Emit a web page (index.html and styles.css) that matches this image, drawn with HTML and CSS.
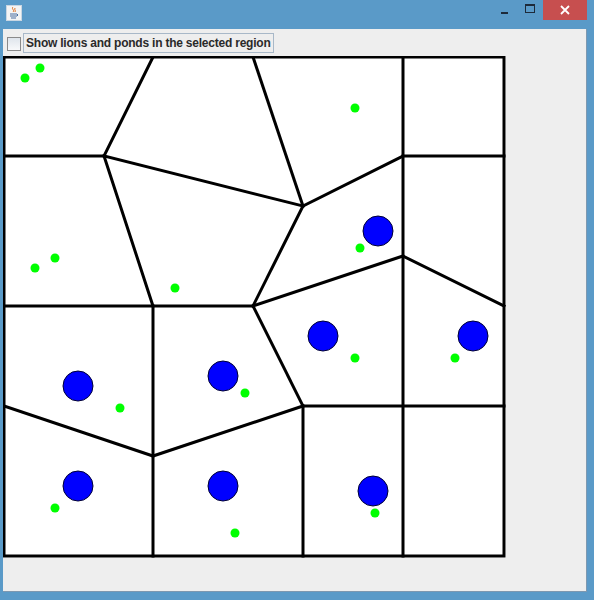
FILE: index.html
```html
<!DOCTYPE html>
<html>
<head>
<meta charset="utf-8">
<link rel="stylesheet" href="styles.css">
</head>
<body>
<div class="window">
  <div class="titlebar">
    <div class="app-icon">
      <svg width="16" height="16" viewBox="0 0 16 16">
        <rect x="0.5" y="0.5" width="15" height="15" fill="#f4f4f4" stroke="#c9d6e2"/>
        <path d="M7 2 C5 4 9 5 7 7 M9 3 C8 5 10 5 9 7" stroke="#e07020" stroke-width="1" fill="none"/>
        <path d="M4 9 H11 M4 11 H11 M5 13 H10" stroke="#4a6fa0" stroke-width="1"/>
        <path d="M11 9 Q13 10 11 11" stroke="#4a6fa0" fill="none"/>
      </svg>
    </div>
    <div class="spacer"></div>
    <div class="btn min"><span class="min-bar"></span></div>
    <div class="btn max"><span class="max-box"></span></div>
    <div class="btn close">
      <svg width="10" height="10" viewBox="0 0 10 10"><path d="M1 1 L9 9 M9 1 L1 9" stroke="#fff" stroke-width="1.8"/></svg>
    </div>
  </div>
  <div class="content">
    <div class="toolbar">
      <span class="checkbox"></span>
      <span class="label">Show lions and ponds in the selected region</span>
    </div>
    <svg class="map" width="503" height="502" viewBox="3 56 503 502">
      <rect x="3" y="56" width="503" height="502" fill="#fff"/>
      <g stroke="#000" stroke-width="3" fill="none" stroke-linecap="square">
        <rect x="4" y="57" width="500" height="499"/>
        <line x1="153" y1="57" x2="104" y2="156"/>
        <line x1="4" y1="156" x2="104" y2="156"/>
        <line x1="104" y1="156" x2="153" y2="306"/>
        <line x1="104" y1="156" x2="303" y2="206"/>
        <line x1="253" y1="57" x2="303" y2="206"/>
        <line x1="303" y1="206" x2="403" y2="156"/>
        <line x1="403" y1="57" x2="403" y2="556"/>
        <line x1="403" y1="156" x2="504" y2="156"/>
        <line x1="303" y1="206" x2="253" y2="306"/>
        <line x1="4" y1="306" x2="253" y2="306"/>
        <line x1="253" y1="306" x2="403" y2="256"/>
        <line x1="403" y1="256" x2="504" y2="306"/>
        <line x1="153" y1="306" x2="153" y2="556"/>
        <line x1="253" y1="306" x2="303" y2="406"/>
        <line x1="4" y1="406" x2="153" y2="456"/>
        <line x1="153" y1="456" x2="303" y2="406"/>
        <line x1="303" y1="406" x2="504" y2="406"/>
        <line x1="303" y1="406" x2="303" y2="556"/>
      </g>
      <g fill="#00ff00">
        <circle cx="40" cy="68" r="4.5"/>
        <circle cx="25" cy="78" r="4.5"/>
        <circle cx="355" cy="108" r="4.5"/>
        <circle cx="55" cy="258" r="4.5"/>
        <circle cx="35" cy="268" r="4.5"/>
        <circle cx="175" cy="288" r="4.5"/>
        <circle cx="360" cy="248" r="4.5"/>
        <circle cx="355" cy="358" r="4.5"/>
        <circle cx="455" cy="358" r="4.5"/>
        <circle cx="120" cy="408" r="4.5"/>
        <circle cx="245" cy="393" r="4.5"/>
        <circle cx="55" cy="508" r="4.5"/>
        <circle cx="235" cy="533" r="4.5"/>
        <circle cx="375" cy="513" r="4.5"/>
      </g>
      <g fill="#0000ff" stroke="#000033" stroke-width="1">
        <circle cx="378" cy="231" r="15"/>
        <circle cx="323" cy="336" r="15"/>
        <circle cx="473" cy="336" r="15"/>
        <circle cx="78" cy="386" r="15"/>
        <circle cx="223" cy="376" r="15"/>
        <circle cx="78" cy="486" r="15"/>
        <circle cx="223" cy="486" r="15"/>
        <circle cx="373" cy="491" r="15"/>
      </g>
    </svg>
  </div>
</div>
</body>
</html>
```
FILE: styles.css
```css
html, body {
  margin: 0;
  padding: 0;
  background: #5a9ac8;
}
.window {
  width: 594px;
  height: 600px;
  box-sizing: border-box;
  background: #5a9ac8;
  display: flex;
  flex-direction: column;
  padding: 0 7px 8px 3px;
}
.titlebar {
  height: 29px;
  display: flex;
  align-items: flex-start;
  margin-right: -7px;
  margin-left: -3px;
}
.app-icon {
  margin: 5px 0 0 6px;
  width: 16px;
  height: 16px;
}
.spacer { flex: 1; }
.btn {
  height: 20px;
  display: flex;
  align-items: center;
  justify-content: center;
}
.min { width: 26px; }
.min-bar {
  display: block;
  width: 7px;
  height: 2px;
  background: #1d2a3a;
  margin-top: 6px;
}
.max { width: 26px; }
.max-box {
  display: block;
  width: 8px;
  height: 6px;
  border: 1px solid #1d2a3a;
  border-top-width: 2px;
  margin-top: -4px;
}
.close {
  width: 44px;
  margin-right: 7px;
  background: #c74f4f;
}
.content {
  flex: 1;
  background: #eeeeee;
  border-right: 1px solid #7d98b0;
  border-bottom: 1px solid #7d98b0;
  display: flex;
  flex-direction: column;
}
.toolbar {
  height: 27px;
  display: flex;
  align-items: center;
  padding-left: 4px;
  font-family: "Liberation Sans", Arial, sans-serif;
  font-weight: bold;
  font-size: 12px;
  color: #2a2a2a;
}
.checkbox {
  width: 12px;
  height: 12px;
  border: 1px solid #8a8a8a;
  background: linear-gradient(#dfe5ec, #f8f9fb);
  margin-top: 2px;
}
.label {
  margin-left: 2px;
  padding: 2px 2px 2px 2px;
  border: 1px solid #a8b8c8;
  line-height: 14px;
  letter-spacing: -0.22px;
}
.map {
  display: block;
}
```
